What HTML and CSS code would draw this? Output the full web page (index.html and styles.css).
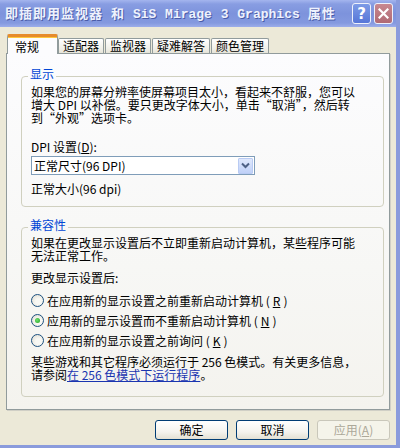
FILE: index.html
```html
<!DOCTYPE html>
<html lang="zh-CN">
<head>
    <meta charset="UTF-8">
    <title>即插即用监视器 和 SiS Mirage 3 Graphics 属性</title>
    <link rel="stylesheet" href="styles.css">
</head>
<body>
<div class="window">
    <div class="titlebar">
        <div class="title">即插即用监视器 和 <span class="latin">SiS Mirage 3 Graphics</span> 属性</div>
        <div class="caption-buttons">
            <span class="cap-btn help">?</span>
            <span class="cap-btn close">
                <svg width="11" height="11" viewBox="0 0 11 11"><path d="M1.5 1.5 L9.5 9.5 M9.5 1.5 L1.5 9.5" stroke="#fff" stroke-width="2.2" stroke-linecap="square"/></svg>
            </span>
        </div>
    </div>

    <div class="content">
        <div class="tabs">
            <div class="tab active">常规</div>
            <div class="tab">适配器</div>
            <div class="tab">监视器</div>
            <div class="tab">疑难解答</div>
            <div class="tab">颜色管理</div>
        </div>

        <div class="panel">
            <fieldset class="group display">
                <legend>显示</legend>
                <p class="text">如果您的屏幕分辨率使屏幕项目太小，看起来不舒服，您可以<br>增大 DPI 以补偿。要只更改字体大小，单击“取消”，然后转<br>到“外观”选项卡。</p>
                <div class="field-label">DPI 设置(<u>D</u>):</div>
                <div class="select">
                    <span class="select-value">正常尺寸(96 DPI)</span>
                    <span class="select-btn">
                        <svg width="9" height="7" viewBox="0 0 9 7"><path d="M1 1.5 L4.5 5 L8 1.5" fill="none" stroke="#4d6185" stroke-width="2"/></svg>
                    </span>
                </div>
                <p class="note">正常大小(96 dpi)</p>
            </fieldset>

            <fieldset class="group compat">
                <legend>兼容性</legend>
                <p class="text">如果在更改显示设置后不立即重新启动计算机，某些程序可能<br>无法正常工作。</p>
                <div class="after-label">更改显示设置后:</div>
                <div class="radios">
                    <div class="radio-row"><span class="radio"></span>在应用新的显示设置之前重新启动计算机 (<u>R</u>)</div>
                    <div class="radio-row"><span class="radio checked"></span>应用新的显示设置而不重新启动计算机 (<u>N</u>)</div>
                    <div class="radio-row"><span class="radio"></span>在应用新的显示设置之前询问 (<u>K</u>)</div>
                </div>
                <p class="text info">某些游戏和其它程序必须运行于 256 色模式。有关更多信息，<br>请参阅<a href="#">在 256 色模式下运行程序</a>。</p>
            </fieldset>
        </div>

        <div class="buttons">
            <button class="btn">确定</button>
            <button class="btn">取消</button>
            <button class="btn" disabled>应用(<u>A</u>)</button>
        </div>
    </div>
</div>
</body>
</html>
```

FILE: styles.css
```css
* {
    box-sizing: border-box;
}

html, body {
    margin: 0;
    padding: 0;
    overflow: hidden;
}

body {
    font-family: "Noto Sans CJK SC", "DejaVu Sans", sans-serif;
    font-size: 12px;
    color: #000;
    background: #ece9d8;
}

.window {
    width: 400px;
    height: 448px;
    background: #ece9d8;
    border-right: 4px solid #8a9bdc;
    border-bottom: 3px solid #8a9bdc;
}

/* title bar */
.titlebar {
    height: 27px;
    display: flex;
    align-items: center;
    justify-content: space-between;
    padding: 0 3px 0 5px;
    background: linear-gradient(to bottom, #a4b5ee 0%, #889de2 15%, #7d93dc 50%, #8499df 85%, #9cadea 100%);
}

.title {
    color: #eef2fd;
    font-weight: bold;
    font-size: 13px;
    letter-spacing: 1px;
    word-spacing: 4px;
    white-space: nowrap;
    text-shadow: 1px 1px 0 #4a5ca8;
    line-height: 27px;
}

.title .latin {
    font-family: "Liberation Mono", monospace;
    letter-spacing: 0;
    word-spacing: 1px;
}

.caption-buttons {
    display: flex;
    gap: 3px;
}

.cap-btn {
    width: 19px;
    height: 21px;
    border: 1px solid #eef1fb;
    border-radius: 3px;
    display: flex;
    align-items: center;
    justify-content: center;
    color: #fff;
    font-weight: bold;
    font-size: 15px;
    font-family: "DejaVu Sans", sans-serif;
}

.help {
    background: linear-gradient(to bottom, #7d9be6, #5676d8);
}

.close {
    background: linear-gradient(to bottom, #c88890, #b06a74);
}

/* body */
.content {
    padding: 7px 6px 0 6px;
}

.tabs {
    display: flex;
    align-items: flex-end;
    height: 19px;
    padding-left: 1px;
    gap: 1px;
    position: relative;
    z-index: 1;
}

.tab {
    height: 15px;
    line-height: 14px;
    padding: 0 4px;
    border: 1px solid #919b9c;
    border-bottom: none;
    border-radius: 2px 2px 0 0;
    background: linear-gradient(to bottom, #ffffff, #f0efe8 70%, #e6e4d8);
    white-space: nowrap;
}

.tab.active {
    height: 20px;
    margin-bottom: -1px;
    margin-right: -1px;
    width: 51px;
    padding: 0 7px;
    line-height: 20px;
    background: #fcfcfe;
    border-top: 3px solid #e68b2c;
    box-shadow: inset 0 1px 0 #ffc83c;
}

.panel {
    height: 357px;
    border: 1px solid #919b9c;
    box-shadow: 1px 1px 0 #d0cfc6;
    background: linear-gradient(to bottom, #fcfcfe 0%, #f7f7f5 60%, #f4f3ee 100%);
    padding: 13px 5px 0 14px;
}

.group {
    margin: 0;
    border: 1px solid #d0d0bf;
    border-radius: 4px;
    padding: 0 9px 10px 9px;
    min-inline-size: 0;
}

.group legend {
    color: #0046d5;
    padding: 0 2px 4px 2px;
    margin-left: -3px;
    line-height: 14px;
}

.text {
    margin: 0;
    line-height: 13px;
    white-space: nowrap;
}

.display {
    height: 140px;
}

.field-label {
    margin-top: 16px;
    line-height: 13px;
}

.select {
    margin-top: 3px;
    width: 224px;
    height: 19px;
    border: 1px solid #7f9db9;
    background: #fff;
    display: flex;
    align-items: center;
    justify-content: space-between;
    padding: 0 1px 0 2px;
}

.select-value {
    line-height: 17px;
}

.select-btn {
    width: 15px;
    height: 16px;
    border: 1px solid #b9cbf3;
    border-radius: 1px;
    background: linear-gradient(to bottom, #dfe8fc, #c0d1f8);
    display: flex;
    align-items: center;
    justify-content: center;
}

.note {
    margin: 7px 0 0 0;
    line-height: 13px;
}

.compat {
    margin-top: 11px;
    height: 179px;
}

.after-label {
    margin-top: 9px;
    line-height: 13px;
}

.radios {
    margin-top: 6px;
}

.radio-row {
    height: 20px;
    display: flex;
    align-items: center;
    gap: 3px;
    white-space: nowrap;
}

.radio {
    width: 13px;
    height: 13px;
    border-radius: 50%;
    border: 1px solid #1c5180;
    background: radial-gradient(circle at 60% 60%, #f8f8f4 30%, #dcd9cc 100%);
    display: flex;
    align-items: center;
    justify-content: center;
    flex: none;
}

.radio.checked::after {
    content: "";
    width: 5px;
    height: 5px;
    border-radius: 50%;
    background: radial-gradient(circle at 40% 40%, #6ee06e, #21a121);
}

.info {
    margin-top: 5px;
}

.info a {
    color: #1a35b0;
}

/* dialog buttons */
.buttons {
    display: flex;
    justify-content: flex-end;
    gap: 8px;
    margin-top: 10px;
}

.btn {
    width: 73px;
    height: 20px;
    padding: 0;
    font-family: inherit;
    font-size: 12px;
    color: #000;
    border: 1px solid #003c74;
    border-radius: 3px;
    background: linear-gradient(to bottom, #ffffff, #f4f3ee 60%, #e3e0d3);
    line-height: 16px;
}

.btn:disabled {
    color: #aca899;
    border-color: #c9c7ba;
    background: #f5f4ea;
}
```
